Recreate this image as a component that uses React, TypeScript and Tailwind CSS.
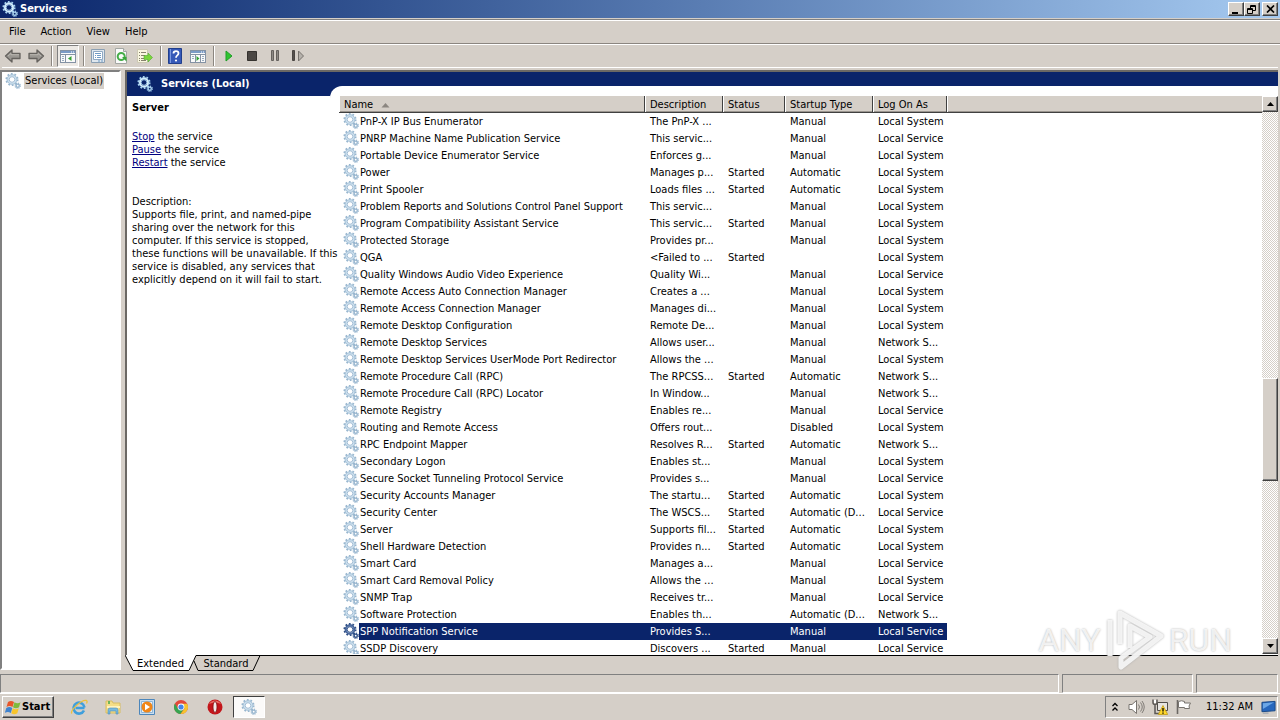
import React from "react";
import clsx from "clsx";

type Service = {
  name: string;
  description: string;
  status: string;
  startup: string;
  logon: string;
};

const row = (
  name: string,
  description: string,
  status: string,
  startup: string,
  logon: string,
): Service => ({ name, description, status, startup, logon });

const SYSTEM = "Local System";
const SERVICE = "Local Service";
const NETWORK = "Network S...";

const services: Service[] = [
  row("PnP-X IP Bus Enumerator", "The PnP-X ...", "", "Manual", SYSTEM),
  row("PNRP Machine Name Publication Service", "This servic...", "", "Manual", SERVICE),
  row("Portable Device Enumerator Service", "Enforces g...", "", "Manual", SYSTEM),
  row("Power", "Manages p...", "Started", "Automatic", SYSTEM),
  row("Print Spooler", "Loads files ...", "Started", "Automatic", SYSTEM),
  row("Problem Reports and Solutions Control Panel Support", "This servic...", "", "Manual", SYSTEM),
  row("Program Compatibility Assistant Service", "This servic...", "Started", "Manual", SYSTEM),
  row("Protected Storage", "Provides pr...", "", "Manual", SYSTEM),
  row("QGA", "<Failed to ...", "Started", "", SYSTEM),
  row("Quality Windows Audio Video Experience", "Quality Wi...", "", "Manual", SERVICE),
  row("Remote Access Auto Connection Manager", "Creates a ...", "", "Manual", SYSTEM),
  row("Remote Access Connection Manager", "Manages di...", "", "Manual", SYSTEM),
  row("Remote Desktop Configuration", "Remote De...", "", "Manual", SYSTEM),
  row("Remote Desktop Services", "Allows user...", "", "Manual", NETWORK),
  row("Remote Desktop Services UserMode Port Redirector", "Allows the ...", "", "Manual", SYSTEM),
  row("Remote Procedure Call (RPC)", "The RPCSS...", "Started", "Automatic", NETWORK),
  row("Remote Procedure Call (RPC) Locator", "In Window...", "", "Manual", NETWORK),
  row("Remote Registry", "Enables re...", "", "Manual", SERVICE),
  row("Routing and Remote Access", "Offers rout...", "", "Disabled", SYSTEM),
  row("RPC Endpoint Mapper", "Resolves R...", "Started", "Automatic", NETWORK),
  row("Secondary Logon", "Enables st...", "", "Manual", SYSTEM),
  row("Secure Socket Tunneling Protocol Service", "Provides s...", "", "Manual", SERVICE),
  row("Security Accounts Manager", "The startu...", "Started", "Automatic", SYSTEM),
  row("Security Center", "The WSCS...", "Started", "Automatic (D...", SERVICE),
  row("Server", "Supports fil...", "Started", "Automatic", SYSTEM),
  row("Shell Hardware Detection", "Provides n...", "Started", "Automatic", SYSTEM),
  row("Smart Card", "Manages a...", "", "Manual", SERVICE),
  row("Smart Card Removal Policy", "Allows the ...", "", "Manual", SYSTEM),
  row("SNMP Trap", "Receives tr...", "", "Manual", SERVICE),
  row("Software Protection", "Enables th...", "", "Automatic (D...", NETWORK),
  row("SPP Notification Service", "Provides S...", "", "Manual", SERVICE),
  row("SSDP Discovery", "Discovers ...", "Started", "Manual", SERVICE),
];

const SELECTED = "SPP Notification Service";

const raised =
  "border border-t-white border-l-white border-r-[#404040] border-b-[#404040] bg-[#d5cfc8] shadow-[inset_-1px_-1px_0_#808080]";

const GearIcon = ({ tone = "light" }: { tone?: "light" | "bright" | "dark" }) => {
  const edge = { light: "#98b6cf", bright: "#a9d3f0", dark: "#2f4f86" }[tone];
  const body = { light: "#c9deed", bright: "#d9effc", dark: "#5675a8" }[tone];
  const hole = { light: "#ffffff", bright: "#0a246a", dark: "#ffffff" }[tone];
  return (
    <svg width="16" height="16" viewBox="0 0 16 16" className="shrink-0" aria-hidden="true">
      <circle cx="7" cy="6.5" r="5.6" fill="none" stroke={edge} strokeWidth="1.9" strokeDasharray="1.7 1.82" />
      <circle cx="7" cy="6.5" r="4.1" fill={hole} stroke={body} strokeWidth="2" />
      <circle cx="7" cy="6.5" r="4.9" fill="none" stroke={edge} strokeWidth="0.7" />
      <circle cx="7" cy="6.5" r="2.8" fill="none" stroke={edge} strokeWidth="0.9" />
      <circle cx="12.7" cy="12.7" r="2.6" fill="none" stroke={edge} strokeWidth="1.2" strokeDasharray="1.2 0.84" />
      <circle cx="12.7" cy="12.7" r="1.6" fill={hole} stroke={edge} strokeWidth="1.4" />
    </svg>
  );
};

const ArrowIcon = ({ flip = false }: { flip?: boolean }) => (
  <svg width="18" height="16" viewBox="0 0 18 16" className={clsx(flip && "-scale-x-100")}>
    <path d="M1.5 8 8 2v3.500h8v5H8V14z" fill="#9a9792" stroke="#65625e" strokeWidth="1.3" strokeLinejoin="round" />
    <path d="M4 8l3-2.600v1.300h8" fill="none" stroke="#bab7b1" />
  </svg>
);

const PaneIcon = ({ side }: { side: "left" | "right" }) => (
  <svg width="16" height="16" viewBox="0 0 16 16">
    <rect x=".5" y="2.500" width="15" height="12" fill="#fafafa" stroke="#8492a4" />
    <path d="M1 3h14v2H1z" fill="#7b9bc6" />
    <path d="M11 4h1m1 0h1" stroke="#fff" />
    <path d="M1 6.500h14" stroke="#8492a4" />
    {side === "left" ? (
      <>
        <path d="M5.500 7v7" stroke="#8492a4" />
        <path d="M2 8.500h2M2 10.500h2M2 12.500h2" stroke="#9aacbf" />
        <path d="M11.500 8v5L8 10.500z" fill="#35a135" />
      </>
    ) : (
      <>
        <path d="M5.500 7v7M10.500 7v7" stroke="#8492a4" />
        <path d="M12 8.500h2M12 10.500h2M12 12.500h2M2 8.500h2M2 10.500h2" stroke="#9aacbf" />
        <path d="M6.500 8v5l3-2.500z" fill="#35a135" />
      </>
    )}
  </svg>
);

const PropertiesIcon = () => (
  <svg width="16" height="16" viewBox="0 0 16 16">
    <path d="M1.500 1.500h13v13h-13z" fill="#dfe7ee" stroke="#8a9fb3" />
    <path d="M3.500 3.500h9v8h-9z" fill="#fff" stroke="#8fa9c4" />
    <path d="M5 5.500h6M5 7.500h1m1 0h4M5 9.500h1m1 0h4M8 13h2m1 0h2" stroke="#6f9bc6" />
  </svg>
);

const RefreshIcon = () => (
  <svg width="16" height="16" viewBox="0 0 16 16">
    <path d="M2.500.500h8l3 3v12h-11z" fill="#fafafa" stroke="#a3a7a3" />
    <path d="M10.500.500v3h3" fill="#dedede" stroke="#a3a7a3" />
    <circle cx="8.200" cy="8.500" r="3.500" fill="none" stroke="#45ad48" strokeWidth="2" />
    <path d="M9 9h4.500v4.500z" fill="#37a83a" />
  </svg>
);

const ExportIcon = () => (
  <svg width="17" height="16" viewBox="0 0 17 16">
    <path d="M1.500 1.500h10v13h-10z" fill="#f9f6e0" stroke="#cdc9b4" />
    <path d="M3 4.500h1m1 0h5M3 7.500h1m1 0h4M3 10.500h1m1 0h4M3 12.500h1m1 0h5" stroke="#85826d" />
    <path d="M8 7.500h4V5l4.500 4.500L12 14v-2.500H8z" fill="#7ad63c" stroke="#52aa30" strokeWidth=".6" />
  </svg>
);

const HelpIcon = () => (
  <svg width="14" height="16" viewBox="0 0 14 16">
    <path d="M.500.500h13v15H.500z" fill="#3659b8" stroke="#213f8c" />
    <path d="M2.500 1v14" stroke="#7a98e0" />
    <path d="M5.500 5.500c0-3.300 5-3 5-.3C10.500 7.500 8 7.200 8 9.800" fill="none" stroke="#fff" strokeWidth="1.800" />
    <circle cx="8" cy="12.500" r="1.100" fill="#fff" />
  </svg>
);

const Separator = () => <div className="h-5 w-0.5 border-l border-[#8b8680] bg-white" />;

const Tool = ({ label, className, children }: { label: string; className?: string; children: React.ReactNode }) => (
  <button aria-label={label} className={clsx("flex h-[22px] items-center justify-center", className)}>
    {children}
  </button>
);

const TitleBar = () => (
  <header className="flex h-[18px] shrink-0 items-center justify-between bg-linear-to-r from-[#0a246a] to-[#a6caf0] pr-0.5 pl-0.5">
    <h1 className="flex items-center gap-0.5 font-bold text-white">
      <GearIcon tone="bright" />
      Services
    </h1>
    <div className="flex">
      <button aria-label="Minimize" className={clsx("flex h-3.5 w-4 items-center justify-center", raised)}>
        <svg width="10" height="9">
          <path d="M1 7h6v2H1z" />
        </svg>
      </button>
      <button aria-label="Restore" className={clsx("mr-0.5 flex h-3.5 w-4 items-center justify-center", raised)}>
        <svg width="10" height="9" fill="none" stroke="#000">
          <path d="M3.500 3V.500h5v5H6M3 1.500h6M.500 3.500h5v5h-5zM0 4.500h6" />
        </svg>
      </button>
      <button aria-label="Close" className={clsx("flex h-3.5 w-4 items-center justify-center", raised)}>
        <svg width="9" height="8" fill="none" stroke="#000" strokeWidth="1.700">
          <path d="M1 .500l7 7M8 .500l-7 7" />
        </svg>
      </button>
    </div>
  </header>
);

const Toolbar = () => (
  <div className="mx-0.5 flex h-6 shrink-0 items-center border-b border-white">
    <Tool label="Back" className="ml-0.5 w-[18px]">
      <ArrowIcon />
    </Tool>
    <Tool label="Forward" className="mr-1.5 ml-[5px] w-[18px]">
      <ArrowIcon flip />
    </Tool>
    <Separator />
    <Tool
      label="Show/Hide Console Tree"
      className="mx-1 w-[22px] border border-t-[#808080] border-r-white border-b-white border-l-[#808080] bg-[#ece9e5]"
    >
      <PaneIcon side="left" />
    </Tool>
    <Separator />
    <Tool label="Properties" className="ml-[5px] w-4">
      <PropertiesIcon />
    </Tool>
    <Tool label="Refresh" className="ml-[7px] w-4">
      <RefreshIcon />
    </Tool>
    <Tool label="Export List" className="mr-[7px] ml-[7px] w-[17px]">
      <ExportIcon />
    </Tool>
    <Separator />
    <Tool label="Help" className="ml-[5px] w-4">
      <HelpIcon />
    </Tool>
    <Tool label="Show/Hide Action Pane" className="mr-[7px] ml-[7px] w-4">
      <PaneIcon side="right" />
    </Tool>
    <Separator />
    <Tool label="Start Service" className="ml-1.5 w-4">
      <svg width="8" height="12">
        <path d="M1 1v10l6-5z" fill="#2fc42f" stroke="#1f9e28" />
      </svg>
    </Tool>
    <Tool label="Stop Service" className="ml-[7px] w-4">
      <svg width="10" height="10">
        <path d="M.500.500h9v9h-9z" fill="#4b4744" stroke="#35322f" />
      </svg>
    </Tool>
    <Tool label="Pause Service" className="ml-[7px] w-4">
      <svg width="9" height="12">
        <path d="M.500.500h2v10h-2zM5.500.500h2v10h-2z" fill="#8d8984" stroke="#66625e" />
      </svg>
    </Tool>
    <Tool label="Restart Service" className="ml-[7px] w-4">
      <svg width="13" height="12">
        <path d="M.500.500h2v10h-2z" fill="#55514e" stroke="#4a4643" />
        <path d="M6.500 1v10l5-5z" fill="#b5b1ab" stroke="#77736e" />
      </svg>
    </Tool>
  </div>
);

const DetailPane = () => (
  <section className="relative flex w-[203px] shrink-0 flex-col bg-white">
    <h2 className="flex h-6 items-center gap-2 bg-[#0a246a] pl-2.5 font-bold text-white">
      <GearIcon tone="bright" />
      Services (Local)
    </h2>
    <div className="pt-[5px] pl-[5px] leading-[13px] whitespace-nowrap">
      <h3 className="font-bold">Server</h3>
      <div className="pt-4">
        {["Stop", "Pause", "Restart"].map((action) => (
          <p key={action}>
            <a href="#" className="text-[#000080] underline">
              {action}
            </a>{" "}
            the service
          </p>
        ))}
      </div>
      <p className="pt-[26px]">
        Description:
        <br />
        Supports file, print, and named-pipe
        <br />
        sharing over the network for this
        <br />
        computer. If this service is stopped,
        <br />
        these functions will be unavailable. If this
        <br />
        service is disabled, any services that
        <br />
        explicitly depend on it will fail to start.
      </p>
    </div>
  </section>
);

const headCell =
  "border-r border-b border-r-[#404040] border-b-[#404040] bg-[#d5cfc8] pt-0.5 pl-[5px] text-left leading-[14px] font-normal shadow-[inset_1px_0_0_#fff,inset_0_-1px_0_#9a958f]";

const ServiceTable = () => (
  <table className="w-full table-fixed border-separate border-spacing-0 whitespace-nowrap">
    <colgroup>
      <col className="w-[306px]" />
      <col className="w-[78px]" />
      <col className="w-[62px]" />
      <col className="w-[88px]" />
      <col className="w-[74px]" />
      <col />
    </colgroup>
    <thead>
      <tr>
        <th className={headCell}>
          <span className="flex items-center gap-2">
            Name
            <svg width="9" height="5">
              <path d="M4.500 0 8.500 4.500h-8z" fill="#8b8680" />
            </svg>
          </span>
        </th>
        <th className={headCell}>Description</th>
        <th className={headCell}>Status</th>
        <th className={headCell}>Startup Type</th>
        <th className={headCell}>Log On As</th>
        <td className="border-b border-[#404040] bg-[#d5cfc8] shadow-[inset_1px_0_0_#fff,inset_0_-1px_0_#9a958f]" />
      </tr>
    </thead>
    <tbody>
      {services.map((s) => {
        const active = s.name === SELECTED;
        const cell = clsx("p-0 pl-[5px]", active && "bg-[#0a246a] text-white");
        return (
          <tr key={s.name} className="h-[17px] leading-[17px]">
            <td className="p-0 pl-1">
              <div className="flex h-[17px]">
                <GearIcon tone={active ? "dark" : "light"} />
                <span className={clsx("flex-1 pl-px", active && "bg-[#0a246a] text-white")}>{s.name}</span>
              </div>
            </td>
            <td className={cell}>{s.description}</td>
            <td className={cell}>{s.status}</td>
            <td className={cell}>{s.startup}</td>
            <td className={cell}>{s.logon}</td>
            <td />
          </tr>
        );
      })}
    </tbody>
  </table>
);

const ScrollBar = () => (
  <div className="flex w-4 shrink-0 flex-col bg-[repeating-conic-gradient(#fff_0_25%,#d5cfc8_0_50%)] bg-size-[2px_2px]">
    <button aria-label="Scroll up" className={clsx("flex h-4 items-center justify-center", raised)}>
      <svg width="7" height="4">
        <path d="M3.500 0 7 4H0z" />
      </svg>
    </button>
    <div className="flex-[266]" />
    <div className={clsx("flex-[102]", raised)} />
    <div className="flex-[157]" />
    <button aria-label="Scroll down" className={clsx("flex h-4 items-center justify-center", raised)}>
      <svg width="7" height="4">
        <path d="M0 0h7L3.500 4z" />
      </svg>
    </button>
  </div>
);

const ViewTabs = () => (
  <div className="relative flex h-[17px] shrink-0">
    <svg width="136" height="17" className="absolute top-0 left-0" aria-hidden="true">
      <path d="M0 0 8 16H64L71 0z" fill="#fff" />
      <path d="M0 0 8 15.500H64L71 .500H1200M69 6l4 9.500h55L135 .500" fill="none" stroke="#000" />
    </svg>
    <div className="ml-[71px] flex-1 border-t border-black" />
    <div className="absolute top-0 left-0 flex h-[17px] items-center pt-0.5">
      <button className="w-[71px]">Extended</button>
      <button className="w-[60px]">Standard</button>
    </div>
  </div>
);

const Watermark = () => (
  <div
    aria-hidden="true"
    className="pointer-events-none absolute right-12 bottom-12 flex h-16 items-center gap-1 font-['Roboto'] text-[32px] leading-none text-white/80 [text-shadow:0_0_2px_#aaa]"
  >
    <span>ANY</span>
    <svg width="60" height="64" viewBox="0 0 60 64" className="drop-shadow-[0_0_1px_#aaa]">
      <path
        d="M5 48V12M15 36V5L56 28 16 59v-9L45 29 25 18v22"
        fill="none"
        stroke="#f8f8f8"
        strokeOpacity=".9"
        strokeWidth="5"
        strokeLinejoin="round"
      />
    </svg>
    <span>RUN</span>
  </div>
);

const StartFlag = () => (
  <svg width="16" height="15" viewBox="0 0 16 15" className="shrink-0">
    <path d="M3 2q3-2 6 0L7.500 7q-3-2-6 0z" fill="#e8562a" />
    <path d="M9.500 2.300q3 1.700 6 0L14 7.300q-3 1.700-6 0z" fill="#7fba3c" />
    <path d="M1.300 8q3-2 6 0L5.800 13q-3-2-6 0z" fill="#3f83cf" />
    <path d="M7.800 8.300q3 1.700 6 0l-1.500 5q-3 1.700-6 0z" fill="#f8c52c" />
  </svg>
);

const quickLaunch = [
  {
    label: "Internet Explorer",
    icon: (
      <svg width="18" height="18" viewBox="0 0 18 18">
        <path d="M14.500 10H5.500M14 12.500A5.500 5.500 0 1 1 14.500 9.500" fill="none" stroke="#3f9fdc" strokeWidth="2.600" />
        <path d="M2 15.500c-3-2 9-14 14.500-13 1 .500.500 2 0 3" fill="none" stroke="#edc13c" strokeWidth="1.300" />
      </svg>
    ),
  },
  {
    label: "Windows Explorer",
    icon: (
      <svg width="18" height="18" viewBox="0 0 18 18">
        <path d="M2 3h6l1 2h7v10H2z" fill="#f5dd86" stroke="#d8bd62" />
        <path d="M4 3h2v3H4z" fill="#6fb55a" />
        <path d="M3 8h13v2H3z" fill="#fff3bd" />
        <path d="M4 16v-4q0-2 2-2h6q2 0 2 2v4h-2v-3H6v3z" fill="#78b9dd" stroke="#4b8fbd" strokeWidth=".6" />
      </svg>
    ),
  },
  {
    label: "Windows Media Player",
    icon: (
      <svg width="18" height="18" viewBox="0 0 18 18">
        <path d="M1.500 1.500h15v15h-15z" fill="#c9def0" stroke="#4c86bb" />
        <path d="M3.500 3.500h11v11h-11z" fill="#e9f3fb" stroke="#8db5d7" />
        <circle cx="9" cy="9" r="5.500" fill="#f08618" />
        <path d="M7 5.800v6.400l5-3.200z" fill="#fff" />
      </svg>
    ),
  },
  {
    label: "Google Chrome",
    icon: (
      <svg width="18" height="18" viewBox="0 0 18 18">
        <circle cx="9" cy="9" r="7" fill="#e2483a" />
        <path d="M2.900 5.500A7 7 0 0 0 8.500 16l3.500-5.300L9 12 6 10.700z" fill="#36a451" />
        <path d="M8.500 16A7 7 0 0 0 15.100 5.700H9.500l3 5z" fill="#f6c52e" />
        <circle cx="9" cy="9" r="3.400" fill="#fff" />
        <circle cx="9" cy="9" r="2.600" fill="#4485e8" />
      </svg>
    ),
  },
  {
    label: "Opera",
    icon: (
      <svg width="18" height="18" viewBox="0 0 18 18">
        <circle cx="9" cy="9" r="7.500" fill="#c3161b" />
        <path d="M3 6a7 7 0 0 1 12 0q-6-3-12 0z" fill="#e86a62" />
        <ellipse cx="9" cy="9" rx="2" ry="5.500" fill="#f3e9e7" stroke="#7c0e10" strokeWidth=".800" />
      </svg>
    ),
  },
];

const Taskbar = () => (
  <footer className="flex h-[27px] shrink-0 items-center border-t border-white bg-[#d5cfc8] pr-0.5 pl-0.5">
    <button className={clsx("flex h-[22px] w-[52px] items-center gap-px pl-0.5 font-bold", raised)}>
      <StartFlag />
      Start
    </button>
    <nav className="ml-2 flex flex-1 items-center">
      {quickLaunch.map((app) => (
        <button key={app.label} aria-label={app.label} className="flex h-[22px] w-[34px] items-center justify-center">
          {app.icon}
        </button>
      ))}
      <button
        aria-label="Services"
        className="ml-px flex h-[22px] w-8 items-center justify-center border border-t-[#404040] border-r-white border-b-white border-l-[#404040] bg-[#fbfaf9]"
      >
        <GearIcon />
      </button>
    </nav>
    <div className="flex h-[22px] items-center border border-t-[#808080] border-r-white border-b-white border-l-[#808080] pr-px pl-1.5">
      <svg width="6" height="10" fill="none" stroke="#000" strokeWidth="1.300">
        <path d="M.500 4 3 1.500 5.500 4M.500 8.500 3 6l2.500 2.500" />
      </svg>
      <svg width="17" height="16" viewBox="0 0 17 16" className="ml-2.5">
        <path d="M1 5.500h3L8.500 1.500v13L4 10.500H1z" fill="#fff" stroke="#77736e" />
        <path d="M10.500 5.500q2 2.500 0 5M12.500 3.500q3.500 4.500 0 9M14 2q4.500 6 0 12" fill="none" stroke="#807c77" />
      </svg>
      <svg width="16" height="16" viewBox="0 0 16 16" className="ml-[7px]">
        <path d="M5.500 3.500h10v8h-10z" fill="#e6e4e1" stroke="#4f4c49" />
        <path d="M1 .500v3q0 2 2 2t2-2v-3M3 5.500v9h5" fill="none" stroke="#5b5855" strokeWidth="1.500" />
        <path d="M2 1h2v3H2z" fill="#fff" />
        <path d="M11 6.500l4.700 9H6.300z" fill="#ffd82b" stroke="#c09a15" strokeWidth=".800" />
        <path d="M11 9v3.500m0 1v1.200" stroke="#000" strokeWidth="1.300" />
      </svg>
      <svg width="16" height="16" viewBox="0 0 16 16" className="ml-2">
        <path d="M1.500 1v14" stroke="#6c6864" strokeWidth="1.600" />
        <path d="M2.500 2.500q3-1.500 6 0v1.500h6l-1.500 3 .500 2.500H8.500V8.500h-6z" fill="#fff" stroke="#77736e" />
      </svg>
      <time className="mr-2 ml-3.5">11:32 AM</time>
      <svg width="15" height="14" viewBox="0 0 16 14">
        <path d="M1 2l14-1v10L1 12z" fill="#2767bd" stroke="#174684" />
        <path d="M2 3l12-1L2 9z" fill="#6ca7e6" />
        <path d="M2 13.500h6" stroke="#8b98a8" />
      </svg>
    </div>
  </footer>
);

const statusPanel = "border border-t-[#808080] border-r-white border-b-white border-l-[#808080]";

export default function App() {
  return (
    <div className="flex h-screen flex-col overflow-hidden bg-[#d5cfc8] font-['DejaVu_Sans_Condensed','DejaVu_Sans',sans-serif] text-[11px] text-black">
      <TitleBar />
      <div className="mt-px flex h-[25px] shrink-0 items-center gap-[11px] border-t border-b border-t-[#808080] border-b-[#8b8680] px-[7px] pt-0.5 shadow-[inset_0_1px_0_#fff,0_1px_0_#fff]">
        {["File", "Action", "View", "Help"].map((item) => (
          <button key={item} className="px-0.5">
            {item}
          </button>
        ))}
      </div>
      <Toolbar />

      <main className="mt-0.5 flex min-h-0 flex-1 pr-0.5">
        <aside className="mr-1 mb-0.5 w-[121px] shrink-0 border-2 border-t-[#808080] border-r-white border-b-white border-l-[#808080] bg-white pl-[3px]">
          <div className="flex items-center gap-[3px] pt-px">
            <GearIcon />
            <span className="bg-[#d5cfc8] px-px leading-4">Services (Local)</span>
          </div>
        </aside>
        <div className="flex min-w-0 flex-1 flex-col">
          <div className="relative flex min-h-0 flex-1 border-t-2 border-l-2 border-[#6b6864]">
            <DetailPane />
            <section className="flex min-w-0 flex-1 flex-col bg-[#0a246a] pt-3.5">
              <div className="flex min-h-0 flex-1 rounded-tl-xl bg-white pt-2.5 pb-px pl-[9px]">
                <div className="min-w-0 flex-1 overflow-hidden">
                  <ServiceTable />
                </div>
                <ScrollBar />
              </div>
            </section>
          </div>
          <ViewTabs />
        </div>
      </main>

      <div className="mt-0.5 flex h-[19px] shrink-0 gap-[3px]">
        <div className={clsx("flex-1", statusPanel)} />
        <div className={clsx("w-[131px]", statusPanel)} />
        <div className={clsx("mr-0.5 w-[82px]", statusPanel)} />
      </div>
      <Taskbar />
      <Watermark />
    </div>
  );
}
